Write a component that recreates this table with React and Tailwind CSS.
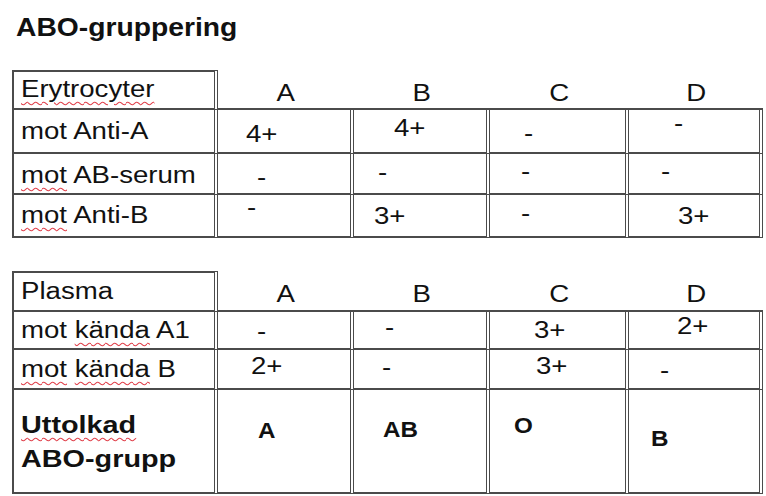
import React from "react";

function T({ children, className = "" }) {
  return <span className={"inline-block origin-left scale-x-[1.2] " + className}>{children}</span>;
}

function S({ children }) {
  return (
    <span className="underline decoration-wavy decoration-[#e0404a] decoration-1 underline-offset-[4px]">
      {children}
    </span>
  );
}

function H({ children }) {
  return <span className="inline-block origin-center scale-x-[1.2]">{children}</span>;
}

const line = "border-[#4b4b4b]";
const c1h = "border-[#4b4b4b] border-t-2 border-l-2 border-b-2 border-r-4 [border-right-style:double] text-[23px] leading-[23px] pl-[7px]";
const hh = "border-[#4b4b4b] border-t-2 border-t-transparent border-b-2 text-[23px] leading-[23px] text-center";
const c1 = "border-[#4b4b4b] border-l-2 border-b-2 border-r-4 [border-right-style:double] text-[23px] leading-[23px] pl-[7px]";
const cd = "border-[#4b4b4b] border-b-2 border-r-4 [border-right-style:double] text-[23px] leading-[23px]";
const cb = "border-[#4b4b4b] border-b-2 border-r-4 [border-right-style:double] text-[22px] leading-[22px] font-bold";

export default function App() {
  return (
    <div className="w-[766px] h-[496px] overflow-hidden bg-white text-[#111] font-['Liberation_Sans',Arial,sans-serif] pt-[15px]">
      <div className="pl-[16px] h-[25px] text-[25px] leading-[25px] font-bold">
        <span className="inline-block origin-left scale-x-[1.13]">ABO-gruppering</span>
      </div>

      <div className={"ml-[12px] mt-[30px] grid grid-cols-[206px_136px_136px_139px_134px] grid-rows-[40px_44px_41px_43px] " + line}>
        <div className={c1h + " pt-[6px]"}><T><S>Erytrocyter</S></T></div>
        <div className={hh + " pt-[10px]"}><H>A</H></div>
        <div className={hh + " pt-[10px]"}><H>B</H></div>
        <div className={hh + " pt-[10px]"}><H>C</H></div>
        <div className={hh + " pt-[10px]"}><H>D</H></div>

        <div className={c1 + " pt-[10px]"}><T>mot Anti-A</T></div>
        <div className={cd + " pt-[13px] pl-[28px]"}><T>4+</T></div>
        <div className={cd + " pt-[7px] pl-[40px]"}><T>4+</T></div>
        <div className={cd + " pt-[12px] pl-[34px]"}><T>-</T></div>
        <div className={cd + " pt-[2px] pl-[45px]"}><T>-</T></div>

        <div className={c1 + " pt-[10px]"}><T><S>mot</S> AB-serum</T></div>
        <div className={cd + " pt-[12px] pl-[39px]"}><T>-</T></div>
        <div className={cd + " pt-[7px] pl-[24px]"}><T>-</T></div>
        <div className={cd + " pt-[6px] pl-[31px]"}><T>-</T></div>
        <div className={cd + " pt-[6px] pl-[32px]"}><T>-</T></div>

        <div className={c1 + " pt-[9px]"}><T><S>mot</S> Anti-B</T></div>
        <div className={cd + " pt-[1px] pl-[29px]"}><T>-</T></div>
        <div className={cd + " pt-[10px] pl-[20px]"}><T>3+</T></div>
        <div className={cd + " pt-[7px] pl-[31px]"}><T>-</T></div>
        <div className={cd + " pt-[10px] pl-[49px]"}><T>3+</T></div>
      </div>

      <div className={"ml-[12px] mt-[33px] grid grid-cols-[206px_136px_136px_139px_134px] grid-rows-[41px_38px_40px_104px] " + line}>
        <div className={c1h + " pt-[7px]"}><T>Plasma</T></div>
        <div className={hh + " pt-[10px]"}><H>A</H></div>
        <div className={hh + " pt-[10px]"}><H>B</H></div>
        <div className={hh + " pt-[10px]"}><H>C</H></div>
        <div className={hh + " pt-[10px]"}><H>D</H></div>

        <div className={c1 + " pt-[7px]"}><T>mot <S>kända</S> A1</T></div>
        <div className={cd + " pt-[8px] pl-[39px]"}><T>-</T></div>
        <div className={cd + " pt-[4px] pl-[31px]"}><T>-</T></div>
        <div className={cd + " pt-[7px] pl-[44px]"}><T>3+</T></div>
        <div className={cd + " pt-[3px] pl-[48px]"}><T>2+</T></div>

        <div className={c1 + " pt-[8px]"}><T><S>mot</S> <S>kända</S> B</T></div>
        <div className={cd + " pt-[5px] pl-[33px]"}><T>2+</T></div>
        <div className={cd + " pt-[6px] pl-[28px]"}><T>-</T></div>
        <div className={cd + " pt-[5px] pl-[46px]"}><T>3+</T></div>
        <div className={cd + " pt-[9px] pl-[31px]"}><T>-</T></div>

        <div className={c1 + " pt-[18px] !text-[24px] !leading-[34px] font-bold"}>
          <T><S>Uttolkad</S><br />ABO-grupp</T>
        </div>
        <div className={cb + " pt-[30px] pl-[40px]"}><span className="inline-block origin-left scale-x-[1.1]">A</span></div>
        <div className={cb + " pt-[29px] pl-[29px]"}><span className="inline-block origin-left scale-x-[1.1]">AB</span></div>
        <div className={cb + " pt-[25px] pl-[24px]"}><span className="inline-block origin-left scale-x-[1.1]">O</span></div>
        <div className={cb + " pt-[38px] pl-[22px]"}><span className="inline-block origin-left scale-x-[1.1]">B</span></div>
      </div>
    </div>
  );
}
